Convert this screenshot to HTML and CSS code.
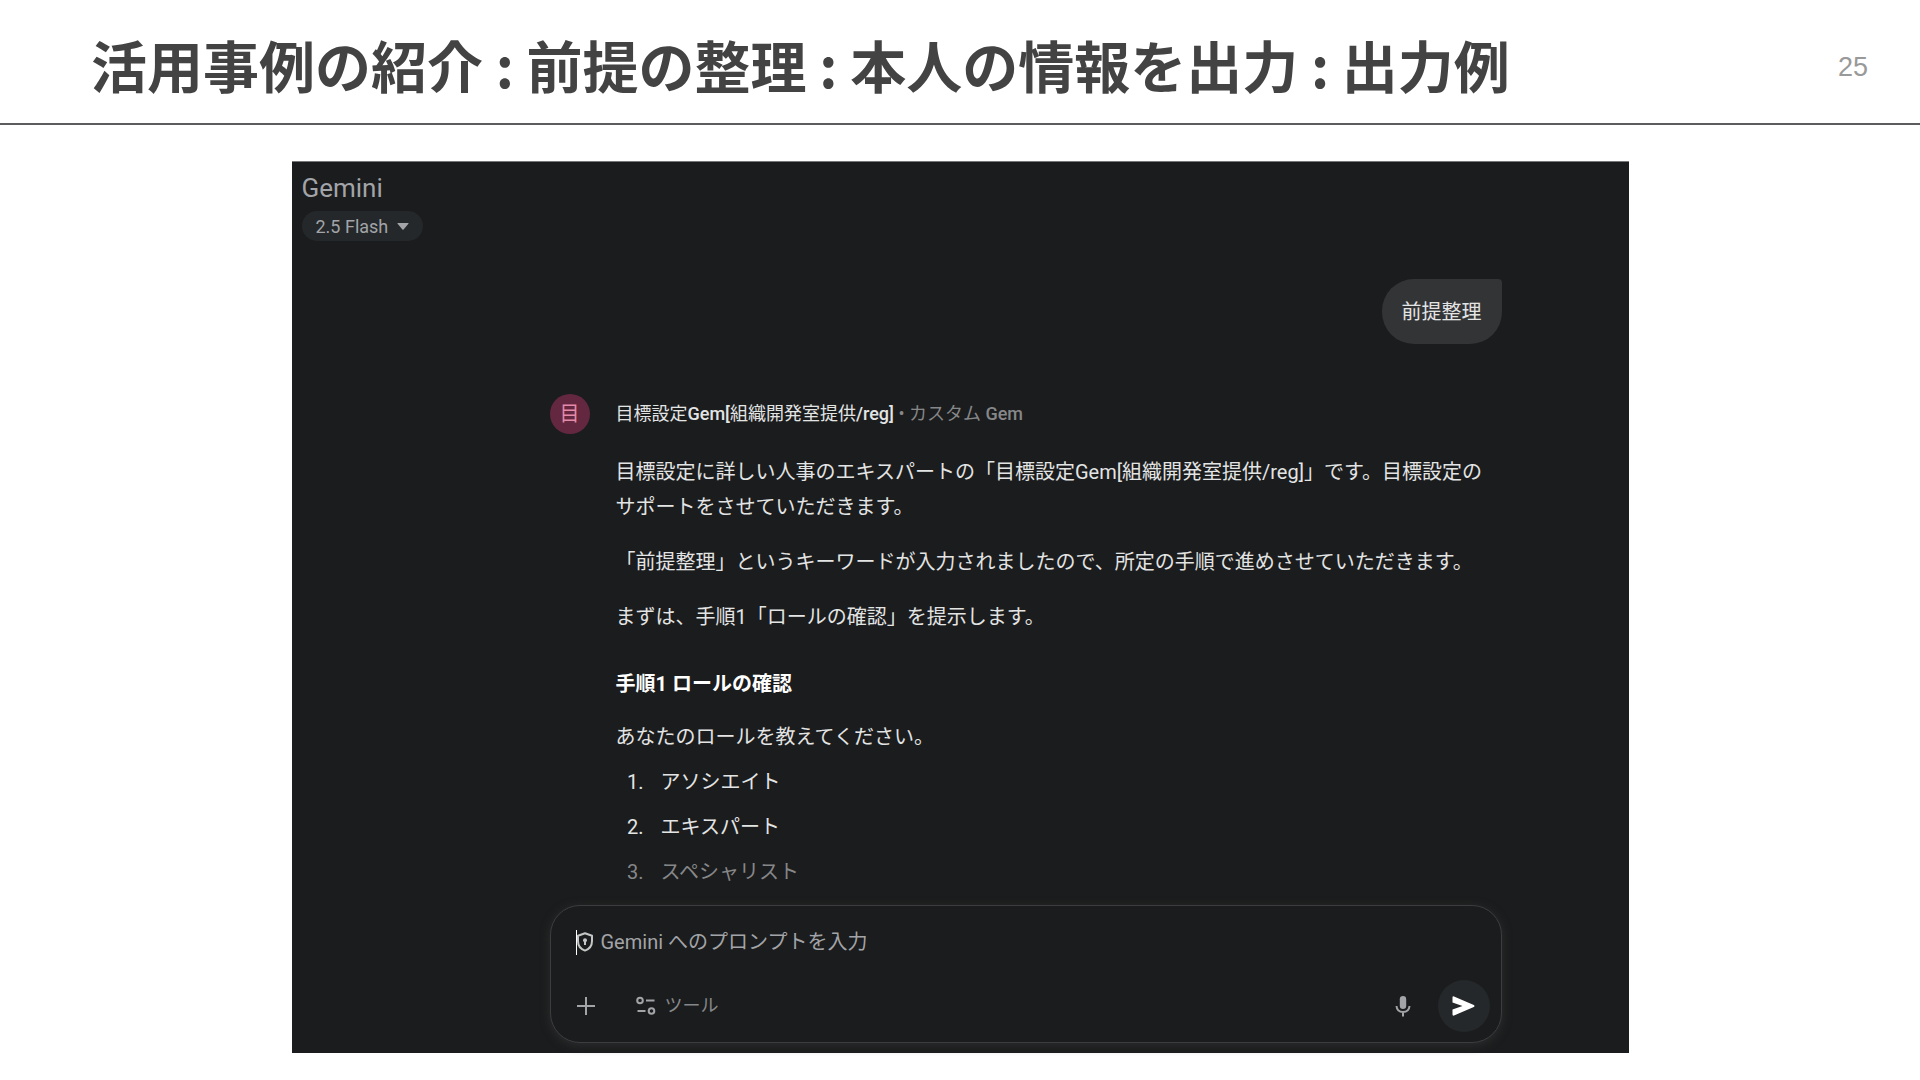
FILE: index.html
```html
<!DOCTYPE html>
<html lang="ja">
<head>
  <meta charset="UTF-8" />
  <meta name="viewport" content="width=device-width, initial-scale=1.0" />
  <title>活用事例の紹介</title>
  <link rel="stylesheet" href="styles.css">
</head>
<body>
  <header class="slide-header">
    <h1>活用事例の紹介 : 前提の整理 : 本人の情報を出力 : 出力例</h1>
    <span class="page-number">25</span>
  </header>

  <main class="app">
    <div class="app-bar">
      <div class="brand">Gemini</div>
      <button class="model-picker" type="button">
        2.5 Flash
        <svg width="12" height="7" viewBox="0 0 12 7"><path d="M1 0h10q1 0 .4.8L6.6 6.5q-.6.6-1.2 0L.6.8Q0 0 1 0z" fill="currentColor"/></svg>
      </button>
    </div>

    <div class="chat">
      <div class="user-message">前提整理</div>

      <article class="reply">
        <div class="avatar">目</div>
        <div class="reply-content">
          <div class="reply-header">
            <span class="gem-name">目標設定<b>Gem[</b>組織開発室提供<b>/reg]</b></span>
            <span class="gem-type">• カスタム <b>Gem</b></span>
          </div>
          <p>目標設定に詳しい人事のエキスパートの「目標設定Gem[組織開発室提供/reg]」です。目標設定のサポートをさせていただきます。</p>
          <p>「前提整理」というキーワードが入力されましたので、所定の手順で進めさせていただきます。</p>
          <p>まずは、手順1「ロールの確認」を提示します。</p>
          <h2>手順1 ロールの確認</h2>
          <p>あなたのロールを教えてください。</p>
          <ol class="roles">
            <li>アソシエイト</li>
            <li>エキスパート</li>
            <li class="faded">スペシャリスト</li>
          </ol>
        </div>
      </article>

      <form class="composer">
        <div class="prompt-row">
          <label class="prompt-label" for="prompt">
            <svg width="18" height="20" viewBox="0 0 18 20" fill="none" stroke="currentColor" stroke-width="2">
              <path d="M8 1.200 15 3.800V9c0 4.600-2.900 8.200-7 9.600C3.900 17.200 1 13.600 1 9V3.800z" stroke-linejoin="round"/>
              <circle cx="8" cy="8.200" r="2" fill="currentColor" stroke="none"/>
              <path d="M8 8v5"/>
            </svg>
          </label>
          <input class="prompt" id="prompt" type="text" placeholder="Gemini へのプロンプトを入力">
        </div>
        <div class="actions">
          <button class="icon-button" type="button" aria-label="追加">
            <svg width="18" height="18" viewBox="0 0 18 18" fill="none" stroke="currentColor" stroke-width="2"><path d="M9 0v18M0 9h18"/></svg>
          </button>
          <button class="tools" type="button">
            <svg width="20" height="20" viewBox="0 0 20 20" fill="none" stroke="currentColor" stroke-width="2">
              <circle cx="4" cy="4.500" r="2.800"/>
              <path d="M10 4.500h8.500M1.500 15h8"/>
              <circle cx="15.500" cy="15" r="2.800"/>
            </svg>
            ツール
          </button>
          <button class="icon-button mic" type="button" aria-label="マイク">
            <svg width="16" height="21" viewBox="0 0 16 21" fill="none" stroke="currentColor" stroke-width="2">
              <rect x="4.800" y="0" width="6.400" height="13" rx="3.200" fill="currentColor" stroke="none"/>
              <path d="M1.500 10c.3 3.800 2.900 6 6.500 6s6.200-2.200 6.500-6M8 16v4.500"/>
            </svg>
          </button>
          <button class="send" type="submit" aria-label="送信">
            <svg width="23" height="20" viewBox="0 0 23 20" fill="currentColor"><path d="M.5 1.400Q.5 0 2 .5L21.800 9q1.400 1 0 2L2 19.500q-1.500.5-1.500-.9V13.400L10.500 10 .5 6.600z"/></svg>
          </button>
        </div>
      </form>
    </div>
  </main>
</body>
</html>
```
FILE: styles.css
```css
:root {
  --panel-bg: #1b1c1d;
  --raised-bg: #25282a;
  --bubble-bg: #333436;
  --border-color: #3c3d3f;
  --text-color: #e3e4e4;
  --muted-color: #a2a4a8;
  --dim-color: #868789;
}

* {
  box-sizing: border-box;
}

body {
  margin: 0;
  background-color: #fff;
  font-family: Roboto, 'Noto Sans CJK JP', sans-serif;
}

.slide-header {
  display: flex;
  justify-content: space-between;
  align-items: center;
  height: 125px;
  padding: 4px 52px 0 91px;
  border-bottom: 2px solid #5c5c5e;
}

h1 {
  margin: 0;
  font-family: 'Noto Sans CJK JP', sans-serif;
  font-size: 56px;
  line-height: 80px;
  font-weight: 700;
  color: #434343;
}

.page-number {
  padding-top: 8px;
  font-family: 'Liberation Sans', sans-serif;
  font-size: 27px;
  color: #999;
}

.app {
  max-width: 1337px;
  margin: 36px auto 27px;
  border-top: 1px solid #77787a;
  background-color: var(--panel-bg);
  color: var(--text-color);
}

.app-bar {
  display: flex;
  flex-direction: column;
  align-items: flex-start;
  gap: 8px;
  padding: 11px 10px 0;
  color: var(--muted-color);
}

.brand {
  font-size: 26px;
  line-height: 30px;
}

button {
  padding: 0;
  border: none;
  background: none;
  font-family: inherit;
  color: var(--muted-color);
  cursor: pointer;
}

.model-picker {
  display: flex;
  align-items: center;
  gap: 9px;
  height: 30px;
  padding: 0 14px;
  border-radius: 15px;
  background-color: var(--raised-bg);
  font-size: 18px;
}

.chat {
  display: flex;
  flex-direction: column;
  padding: 38px 127px 10px 258px;
}

.user-message {
  align-self: flex-end;
  padding: 16px 20px 14px;
  border-radius: 32px 4px 32px 32px;
  background-color: var(--bubble-bg);
  font-size: 20px;
  line-height: 35px;
}

.reply {
  display: flex;
  gap: 26px;
  margin-top: 50px;
}

.avatar {
  flex: none;
  width: 40px;
  height: 40px;
  border-radius: 50%;
  background-color: #632840;
  color: #e58aa8;
  font-size: 20px;
  line-height: 40px;
  text-align: center;
}

.reply-content {
  font-size: 20px;
  line-height: 35px;
}

.reply-header {
  margin-bottom: 21px;
  font-size: 18px;
  line-height: 40px;
}

.reply-header b {
  font-weight: 500;
}

.gem-type {
  color: var(--dim-color);
}

.reply-content p {
  margin: 0 0 20px;
}

.reply-content h2 {
  margin: 32px 0 18px;
  font-size: 20px;
  font-weight: 700;
  color: #fff;
}

.reply-content .roles {
  margin: -10px 0 0;
  padding-left: 33px;
}

.roles li {
  padding-left: 12px;
}

.roles li + li {
  margin-top: 10px;
}

.roles .faded {
  color: var(--dim-color);
}

.composer {
  display: flex;
  flex-direction: column;
  justify-content: space-between;
  height: 138px;
  margin-top: 15px;
  padding: 16px 11px 10px 25px;
  border: 1px solid var(--border-color);
  border-radius: 30px;
  background-color: var(--panel-bg);
  box-shadow: 0 2px 8px 1px #2a2b2c;
}

.prompt-row {
  display: flex;
  align-items: center;
  height: 40px;
}

/* text cursor at the start of the prompt */
.prompt-label {
  display: flex;
  align-items: center;
  height: 25px;
  border-left: 1px solid #fff;
  color: #c4c7c5;
}

.prompt {
  flex: 1;
  height: 40px;
  padding: 0 0 0 6px;
  border: none;
  outline: none;
  background: none;
  font-family: inherit;
  font-size: 20px;
  color: var(--text-color);
}

.prompt::placeholder {
  color: var(--muted-color);
}

.actions {
  display: flex;
  align-items: center;
}

.icon-button {
  display: flex;
  justify-content: center;
  width: 20px;
}

.tools {
  display: flex;
  align-items: center;
  gap: 9px;
  margin-left: 40px;
  font-size: 18px;
  line-height: 24px;
  color: var(--dim-color);
}

.tools svg {
  color: var(--muted-color);
}

.mic {
  margin-left: auto;
}

.send {
  display: flex;
  justify-content: center;
  align-items: center;
  width: 52px;
  height: 52px;
  margin-left: 25px;
  border-radius: 50%;
  background-color: var(--raised-bg);
  color: #fff;
}
```
